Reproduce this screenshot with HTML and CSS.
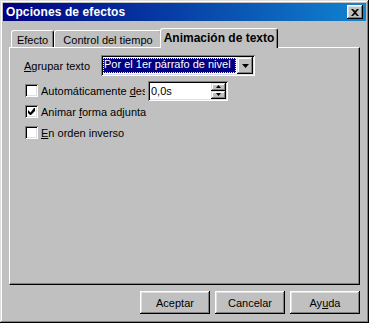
FILE: index.html
```html
<!DOCTYPE html>
<html lang="es">
<head>
	<meta charset="UTF-8">
	<title>Opciones de efectos</title>
<link rel="stylesheet" href="styles.css">
</head>
<body>
	<div class="window">
		<div class="titlebar">
			<span class="title">Opciones de efectos</span>
			<span class="close">
				<svg width="8" height="7" viewBox="0 0 8 7"><path d="M0 0h2l2 2 2-2h2L5 3.5 8 7H6L4 5 2 7H0l3-3.5z" fill="#000"/></svg>
			</span>
		</div>
		<div class="body">
			<div class="tabs">
				<div class="tab tab-efecto">Efecto</div>
				<div class="tab tab-tiempo">Control del tiempo</div>
				<div class="tab tab-active">Animación de texto</div>
			</div>
			<div class="panel">
				<div class="row">
					<span class="label"><u>A</u>grupar texto</span>
					<div class="combo">
						<div class="combo-value">Por el 1er párrafo de nivel</div>
						<div class="combo-btn">
							<svg width="7" height="4" viewBox="0 0 7 4"><path d="M0 0h7L3.5 4z" fill="#000"/></svg>
						</div>
					</div>
				</div>
				<div class="row check-row">
					<span class="checkbox"></span>
					<span class="check-label clip">Automáticamente <u>d</u>esde:</span>
					<div class="spin">
						<span class="spin-text">0,0s</span>
						<div class="spin-btns">
							<span class="spin-btn"><svg width="5" height="3" viewBox="0 0 5 3"><path d="M2.5 0L5 3H0z" fill="#000"/></svg></span>
							<span class="spin-btn"><svg width="5" height="3" viewBox="0 0 5 3"><path d="M0 0h5L2.5 3z" fill="#000"/></svg></span>
						</div>
					</div>
				</div>
				<div class="row check-row">
					<span class="checkbox">
						<svg width="7" height="7" viewBox="0 0 7 7"><path d="M6 0h1v3L3 7H2L0 5V2l2.5 2.5z" fill="#000"/></svg>
					</span>
					<span class="check-label">Animar <u>f</u>orma adjunta</span>
				</div>
				<div class="row check-row">
					<span class="checkbox"></span>
					<span class="check-label"><u>E</u>n orden inverso</span>
				</div>
			</div>
			<div class="buttons">
				<span class="btn">Aceptar</span>
				<span class="btn">Cancelar</span>
				<span class="btn">Ay<u>u</u>da</span>
			</div>
		</div>
	</div>
</body>
</html>
```

FILE: styles.css
```css
*{ margin: 0; padding: 0; box-sizing: border-box;}
body{ background: #c0c0c0; font-family: "Liberation Sans", Arial, sans-serif; font-size: 11px; color: #000;}
u{ text-decoration: underline; text-underline-offset: 1px;}

.window{ width: 369px; height: 323px; padding: 3px; background: #c0c0c0;
	box-shadow: inset -1px -1px #000, inset 1px 1px #dfdfdf, inset -2px -2px #808080, inset 2px 2px #fff;}

.titlebar{ height: 18px; display: flex; align-items: center; justify-content: space-between; padding: 0 3px 0 3px;
	background: linear-gradient(to right, #000080, #1084d0);}
.title{ color: #fff; font-weight: bold; font-size: 12px; letter-spacing: 0.1px;}
.close{ width: 16px; height: 14px; display: flex; align-items: center; justify-content: center; background: #c0c0c0;
	box-shadow: inset -1px -1px #000, inset 1px 1px #fff, inset -2px -2px #808080, inset 2px 2px #dfdfdf;}

.body{ padding: 0 6px;}

.tabs{ display: flex; align-items: flex-end; height: 19px; margin-top: 7px; padding-left: 2px;}
.tab{ height: 17px; display: flex; align-items: center; justify-content: center; padding-top: 2px; background: #c0c0c0;
	border: 1px solid; border-color: #fff #000 transparent #fff; border-bottom: none; border-radius: 3px 3px 0 0;
	box-shadow: inset -1px 0 #808080;}
.tab-efecto{ width: 43px;}
.tab-tiempo{ width: 108px;}
.tab-active{ width: 118px; height: 20px; margin: 0 -2px -1px -2px; padding-top: 0; padding-bottom: 2px; font-weight: bold; font-size: 12px; z-index: 1;}

.panel{ height: 238px; padding: 7px 14px 0; border: 1px solid; border-color: #fff #000 #000 #fff;
	box-shadow: inset -1px -1px #808080;}

.row{ display: flex; align-items: center; height: 21px;}
.label{ width: 77px;}
.combo{ width: 154px; height: 21px; display: flex; padding: 2px; background: #fff;
	box-shadow: inset 1px 1px #808080, inset -1px -1px #fff, inset 2px 2px #000, inset -2px -2px #dfdfdf;}
.combo-value{ flex: 1; margin: 1px 1px 1px 0; background: #000080; color: #fff; padding-left: 1px; line-height: 13px;
	outline: 1px dotted #ffff80; outline-offset: -1px;}
.combo-btn{ width: 16px; display: flex; align-items: center; justify-content: center; background: #c0c0c0;
	box-shadow: inset -1px -1px #000, inset 1px 1px #dfdfdf, inset -2px -2px #808080, inset 2px 2px #fff;}

.check-row{ padding-left: 1px;}
.panel .row + .check-row{ margin-top: 4px;}
.panel .check-row + .check-row{ margin-top: 0;}
.checkbox{ width: 13px; height: 13px; display: flex; align-items: center; justify-content: center; background: #fff;
	box-shadow: inset 1px 1px #808080, inset -1px -1px #fff, inset 2px 2px #000, inset -2px -2px #dfdfdf;}
.check-label{ margin-left: 3px; white-space: nowrap;}
.clip{ width: 104px; overflow: hidden; margin-right: 3px;}

.spin{ width: 80px; height: 20px; display: flex; padding: 2px; background: #fff;
	box-shadow: inset 1px 1px #808080, inset -1px -1px #fff, inset 2px 2px #000, inset -2px -2px #dfdfdf;}
.spin-text{ flex: 1; padding-left: 1px; line-height: 16px;}
.spin-btns{ width: 15px; display: flex; flex-direction: column;}
.spin-btn{ flex: 1; display: flex; align-items: center; justify-content: center; background: #c0c0c0;
	box-shadow: inset -1px -1px #000, inset 1px 1px #dfdfdf, inset -2px -2px #808080, inset 2px 2px #fff;}

.buttons{ display: flex; justify-content: flex-end; gap: 5px; margin-top: 6px;}
.btn{ width: 70px; height: 23px; display: flex; align-items: center; justify-content: center;
	box-shadow: inset -1px -1px #000, inset 1px 1px #fff, inset -2px -2px #808080, inset 2px 2px #dfdfdf;}
```
